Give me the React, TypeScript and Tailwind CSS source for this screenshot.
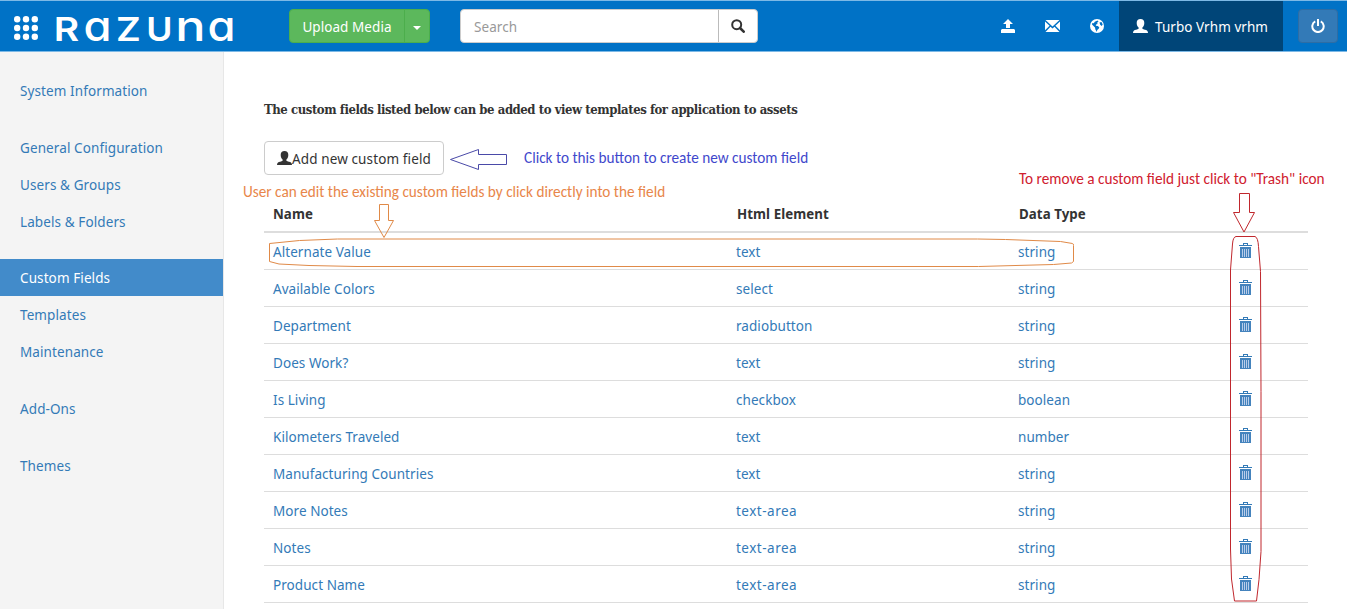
import React from "react";

const menuGroups: string[][] = [
  ["System Information"],
  ["General Configuration", "Users & Groups", "Labels & Folders"],
  ["Custom Fields", "Templates", "Maintenance"],
  ["Add-Ons"],
  ["Themes"],
];

const rows: [string, string, string][] = [
  ["Alternate Value", "text", "string"],
  ["Available Colors", "select", "string"],
  ["Department", "radiobutton", "string"],
  ["Does Work?", "text", "string"],
  ["Is Living", "checkbox", "boolean"],
  ["Kilometers Traveled", "text", "number"],
  ["Manufacturing Countries", "text", "string"],
  ["More Notes", "text-area", "string"],
  ["Notes", "text-area", "string"],
  ["Product Name", "text-area", "string"],
];

const logoLetters: [string, string][] = [
  ["R", "text-[33px] font-semibold scale-x-[1.18]"],
  ["a", "text-[42px] font-medium scale-x-[1.08]"],
  ["Z", "text-[33px] font-semibold scale-x-[1.15]"],
  ["U", "text-[33px] font-semibold scale-x-[1.08]"],
  ["n", "text-[42px] font-medium scale-x-[1.2]"],
  ["a", "text-[42px] font-medium scale-x-[1.08]"],
];

function UserIcon({ className }: { className?: string }) {
  return (
    <svg viewBox="0 0 15 14" className={className} fill="currentColor">
      <path d="M7.500 0C10 0 11.300 1.500 11.300 3.900c0 2.100-.8 3.700-1.900 4.600v1.300c1 .7 3.900 1.100 4.800 1.900.6.5.8 1.400.8 2.300H0c0-.9.2-1.800.8-2.300.9-.8 3.800-1.200 4.800-1.900V8.500C4.500 7.600 3.700 6 3.700 3.900 3.700 1.500 5 0 7.500 0z" />
    </svg>
  );
}

function TrashIcon() {
  return (
    <svg viewBox="0 0 13 15" className="mb-[3px] h-[15px] w-[13px]" shapeRendering="crispEdges">
      <path d="M4 2V0h5v2h4v1H0V2h4zm1 0h3V1H5v1z" fill="#337ab7" />
      <path d="M1 4h11v11H1z" fill="#4483bd" />
      <path d="M3 6h1v8H3zM5 6h1v8H5zM7 6h1v8H7zM9 6h1v8H9z" fill="#b9cdea" />
    </svg>
  );
}

function Header() {
  return (
    <header className="flex h-[52px] w-full shrink-0 items-stretch border-y border-[#7db9e6] bg-[#0072c6]">
      <div className="flex w-[289px] items-center pl-[14px]">
        <svg viewBox="0 0 24 24" className="mt-1 h-6 w-6" fill="#fff">
          {[3.2, 12, 20.8].map((y) =>
            [3.2, 12, 20.8].map((x) => <circle key={`${x}-${y}`} cx={x} cy={y} r="3.200" />)
          )}
        </svg>
        <div className="ml-[13px] flex h-[35px] items-baseline font-['Inter',sans-serif] leading-[33px] text-white [font-feature-settings:'cv11']">
          {logoLetters.map(([c, style], i) => (
            <span key={i} className={`inline-block w-[31px] text-center leading-[33px] ${style}`}>
              {c}
            </span>
          ))}
        </div>
      </div>
      <div className="mt-2 flex h-[34px] w-[141px] rounded-[4px] border border-[#4cae4c] bg-[#5cb85c] text-white">
        <button className="w-[115px] border-r border-[#4cae4c] pt-[3px] text-center">Upload Media</button>
        <span className="flex flex-1 items-center justify-center pt-[3px]">
          <svg viewBox="0 0 8 4" className="h-1 w-2" fill="currentColor">
            <path d="M0 0h8L4 4z" />
          </svg>
        </span>
      </div>
      <div className="ml-[30px] mt-2 flex h-[34px] w-[298px] rounded-[4px] border border-[#ccc] bg-white">
        <div className="flex w-[258px] items-center border-r border-[#bbb] pl-[13px] pt-[3px] text-[#999]">Search</div>
        <span className="flex flex-1 items-center justify-center text-[#333]">
          <svg viewBox="0 0 14 14" className="h-[14px] w-[14px]" fill="none" stroke="currentColor">
            <circle cx="5.700" cy="5.700" r="4.500" strokeWidth="2" />
            <path d="M9 9l3.700 3.700" strokeWidth="2.600" strokeLinecap="round" />
          </svg>
        </span>
      </div>
      <div className="ml-auto flex items-stretch text-white">
        <div className="flex w-[118px] items-center justify-between pb-px pr-[15px]">
          <svg viewBox="0 0 14 14" className="h-[14px] w-[14px]" fill="currentColor">
            <path d="M7 0l5 5H9v4H5V5H2zM1 10h12l1 1v3H0v-3z" />
          </svg>
          <svg viewBox="0 0 15 12" className="h-3 w-[15px]" fill="currentColor">
            <path d="M.5 0h14l-7 6.500zM0 1.500l4.600 4.300L0 10.300zM15 1.500v8.800l-4.600-4.500zM5.500 6.700l2 1.800 2-1.800 5 5.300H.5z" />
          </svg>
          <svg viewBox="0 0 14 14" className="h-[14px] w-[14px]">
            <circle cx="7" cy="7" r="7" fill="currentColor" />
            <path
              d="M7.500 1.500l1 1.200-1.500 1 .6 1.200-1.600.6-.2 1.300 2 .2 1.500 1.300-.6 1.500-1.500 1.200-.3 2-1.500-2.600-.4-2L3.500 7 2 5.500l.3-1.400 1.500.2 1-1.500zM9.500 3.500l2-.5 1.200 2.500-1 1.500-1.500-1.200z"
              fill="#0072c6"
            />
          </svg>
        </div>
        <div className="flex w-[164px] items-center bg-[#004578] pl-[14px]">
          <UserIcon className="h-[14px] w-[15px]" />
          <span className="ml-[7px] whitespace-nowrap pt-[3px]">Turbo Vrhm vrhm</span>
        </div>
        <div className="w-[64px] pl-[15px] pt-2">
          <div className="flex h-[34px] w-[40px] items-center justify-center rounded-[4px] border border-[#2e6da4] bg-[#337ab7]">
            <svg viewBox="0 0 14 14" className="h-[14px] w-[14px]" fill="none" stroke="currentColor" strokeWidth="2">
              <path d="M4.200 2.400a5.700 5.700 0 1 0 5.600 0" />
              <path d="M7 0v7" />
            </svg>
          </div>
        </div>
      </div>
    </header>
  );
}

function Sidebar() {
  return (
    <nav className="flex w-[224px] shrink-0 flex-col gap-5 border-r border-[#e7e7e7] bg-[#f4f4f4] pt-[20px] tracking-[0.100px] text-[#337ab7]">
      {menuGroups.map((group) => (
        <div key={group[0]}>
          {group.map((label) => (
            <div
              key={label}
              className={
                label === "Custom Fields"
                  ? "flex h-[36.800px] items-center bg-[#428bca] pl-5 pt-[2px] text-white"
                  : "flex h-[36.800px] items-center pl-5 pt-[2px]"
              }
            >
              {label}
            </div>
          ))}
        </div>
      ))}
    </nav>
  );
}

function Annotations() {
  return (
    <div className="pointer-events-none absolute inset-0 whitespace-nowrap font-[Carlito,Lato,sans-serif] text-[15.250px] leading-5 tracking-normal">
      <span className="absolute left-[524px] top-[148px] text-[#3f48cc]">Click to this button to create new custom field</span>
      <span className="absolute left-[243px] top-[182px] text-[#e8864a]">
        User can edit the existing custom fields by click directly into the field
      </span>
      <span className="absolute left-[1019px] top-[169px] text-[#d0202e]">To remove a custom field just click to "Trash" icon</span>
      <svg viewBox="0 0 1347 609" className="absolute left-0 top-0 h-[609px] w-[1347px]" fill="none">
        <path d="M450.500 159.500l28-10v5h28v10h-28v5z" stroke="#4a4aa8" />
        <path d="M379.500 204.500h9v16h5l-9.500 17-9.500-17h5z" stroke="#e08a48" />
        <path
          d="M269.500 243.500l30-3 38-1.500h640l28 .5 55 2 12 2q1 0 1 2v16l-2 1.500-18 1.500-75 2H357l-48-1-30-1.500-9.500-2.500z"
          stroke="#e08a48"
        />
        <path d="M1239.500 193.500h10v19h5l-10.500 19.500-10.500-19.500h6z" stroke="#c0272d" />
        <path
          d="M1236 236.500h19q3 1 3.500 10l2 25 .5 120v160l-2 28-2.500 21.500h-22l-3-22-1-30V270l2-26q.5-7 3.500-7.500z"
          stroke="#c0272d"
        />
      </svg>
    </div>
  );
}

export default function App() {
  return (
    <div className="relative flex h-[609px] w-[1347px] flex-col overflow-hidden bg-white font-['Noto_Sans',sans-serif] text-[13.500px] tracking-[0.060px] text-[#333]">
      <Header />
      <div className="flex min-h-0 flex-1">
        <Sidebar />
        <main className="w-[1084px] pl-10 pt-[48px]">
          <h1 className="h-5 whitespace-nowrap font-['DejaVu_Serif_Condensed','DejaVu_Serif',serif] text-[13px] font-bold leading-5 tracking-[-0.435px]">
            The custom fields listed below can be added to view templates for application to assets
          </h1>
          <button className="mt-[21px] flex h-[34px] w-[180px] items-center whitespace-nowrap rounded-[4px] border border-[#ccc] pl-3">
            <UserIcon className="h-[14px] w-[15px]" />
            <span className="pt-[3px] tracking-[0.120px]">Add new custom field</span>
          </button>
          <div className="mt-5">
            <div className="flex h-[38px] items-center border-b-2 border-[#ddd] pt-[4px] text-[13.300px] font-bold">
              <span className="w-[473px] pl-[9px]">Name</span>
              <span className="w-[282px]">Html Element</span>
              <span>Data Type</span>
            </div>
            {rows.map(([name, element, type]) => (
              <div key={name} className="flex h-[37px] items-center border-b border-[#ddd] pt-[2px] text-[#337ab7]">
                <span className="w-[472px] pl-[9px]">{name}</span>
                <span className={element === "text-area" ? "w-[282px] tracking-[0.500px]" : "w-[282px]"}>{element}</span>
                <span className="w-[221px]">{type}</span>
                <TrashIcon />
              </div>
            ))}
          </div>
        </main>
      </div>
      <Annotations />
    </div>
  );
}
